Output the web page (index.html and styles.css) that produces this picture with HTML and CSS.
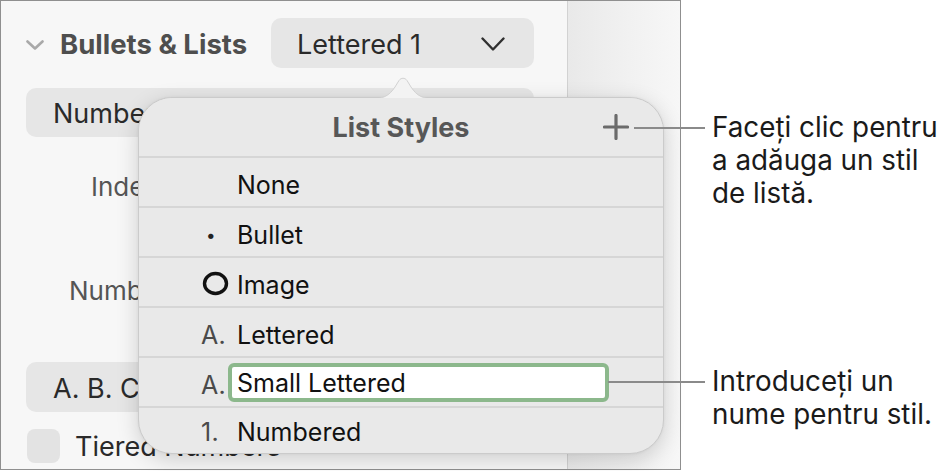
FILE: index.html
```html
<!DOCTYPE html>
<html lang="ro">
<head>
<meta charset="utf-8">
<title>List Styles</title>
<link rel="stylesheet" href="styles.css">
</head>
<body>
<div class="stage">
  <div class="frame">
    <div class="inspector">
      <div class="section-head">
        <svg class="disclosure" width="18" height="10" viewBox="0 0 18 10"><path d="M1.5 1.5 L9 8.5 L16.5 1.5" fill="none" stroke="#a9a9a9" stroke-width="2.6" stroke-linecap="round" stroke-linejoin="round"/></svg>
        <span class="section-title">Bullets &amp; Lists</span>
        <div class="popup">
          <span>Lettered 1</span>
          <svg class="popup-chev" width="24" height="15" viewBox="0 0 24 15"><path d="M1.5 1.5 L12 12.5 L22.5 1.5" fill="none" stroke="#303030" stroke-width="2.4" stroke-linecap="round" stroke-linejoin="round"/></svg>
        </div>
      </div>
      <div class="wide-btn">Numbered</div>
      <div class="field-row row-indent"><span class="label">Indent:</span></div>
      <div class="field-row row-number"><span class="label">Number:</span></div>
      <div class="wide-btn abc">A. B. C.</div>
      <div class="check-row"><span class="checkbox"></span><span class="check-label">Tiered Numbers</span></div>
    </div>
    <div class="strip"></div>

    <div class="popover">
      <svg class="arrow" width="64" height="24" viewBox="0 0 64 24"><path d="M0 24 C12 24 18 21 24 12 L28 5.5 C30 2.5 34 2.5 36 5.5 L40 12 C46 21 52 24 64 24 Z" fill="#f3f3f3" stroke="#d2d2d2" stroke-width="1"/></svg>
      <div class="pop-head">
        <span></span>
        <span class="pop-title">List Styles</span>
        <svg class="plus" width="26" height="26" viewBox="0 0 26 26"><path d="M13 1.5 V24.5 M1.5 13 H24.5" stroke="#6b6b6b" stroke-width="3.2" stroke-linecap="round"/></svg>
      </div>
      <ul class="styles">
        <li class="style-row"><span class="marker"></span><span class="name">None</span></li>
        <li class="style-row"><span class="marker m-bullet">•</span><span class="name">Bullet</span></li>
        <li class="style-row"><span class="marker m-image"><svg width="27" height="25" viewBox="0 0 27 25"><ellipse cx="13.5" cy="12.5" rx="11" ry="10" fill="none" stroke="#111" stroke-width="3.4"/></svg></span><span class="name">Image</span></li>
        <li class="style-row"><span class="marker">A.</span><span class="name">Lettered</span></li>
        <li class="style-row"><span class="marker">A.</span><span class="name-field">Small Lettered</span></li>
        <li class="style-row"><span class="marker">1.</span><span class="name">Numbered</span></li>
      </ul>
    </div>
  </div>

  <div class="callout callout-add">
    <span class="leader"></span>
    <p class="callout-text">Faceți clic pentru<br>a adăuga un stil<br>de listă.</p>
  </div>
  <div class="callout callout-name">
    <span class="leader"></span>
    <p class="callout-text">Introduceți un<br>nume pentru stil.</p>
  </div>
</div>
</body>
</html>
```

FILE: styles.css
```css
* { box-sizing: border-box; }
html, body { margin: 0; padding: 0; background: #ffffff; }
body {
  font-family: "Inter", "Noto Sans", "Liberation Sans", sans-serif;
  color: #1d1d1d;
  width: 947px;
  height: 471px;
  overflow: hidden;
}
.stage { position: relative; width: 947px; height: 471px; }

.frame {
  position: relative;
  width: 681px;
  height: 470px;
  border: 1px solid #8f8f8f;
  display: flex;
  background: #f7f7f7;
}

.inspector {
  width: 566px;
  padding: 17px 33px 0 25px;
  display: flex;
  flex-direction: column;
  background: #f7f7f7;
}
.strip {
  flex: 1;
  border-left: 1px solid #d2d2d2;
  background: linear-gradient(90deg, #e9e9e9 0%, #efefef 40%, #f7f7f7 100%);
}

.section-head {
  display: flex;
  align-items: center;
  height: 50px;
}
.disclosure { margin: 3px 16px 0 0; }
.section-title {
  font-size: 27.5px;
  font-weight: 700;
  color: #4e4e4e;
  padding-top: 2px;
}
.popup {
  margin-left: auto;
  width: 263px;
  height: 50px;
  background: #e6e6e6;
  border-radius: 10px;
  display: flex;
  align-items: center;
  justify-content: space-between;
  padding: 2px 29px 0 26px;
  font-size: 27px;
  color: #2a2a2a;
}
.popup-chev { margin-top: 0; }

.wide-btn {
  margin-top: 20px;
  height: 49px;
  background: #e6e6e6;
  border-radius: 10px;
  display: flex;
  align-items: center;
  padding: 2px 0 0 27px;
  font-size: 27px;
  color: #2a2a2a;
}
.field-row {
  display: flex;
  align-items: center;
  font-size: 26px;
  color: #555555;
}
.row-indent { margin-top: 34px; height: 30px; padding-left: 65px; }
.row-number { margin-top: 74px; height: 30px; padding-left: 43px; }
.wide-btn.abc { margin-top: 57px; height: 50px; }

.check-row {
  margin-top: 17px;
  display: flex;
  align-items: center;
  gap: 15px;
  padding-left: 1px;
}
.checkbox {
  width: 33px;
  height: 34px;
  border-radius: 8px;
  background: #e3e3e3;
}
.check-label { font-size: 27px; color: #2a2a2a; }

/* popover */
.popover {
  position: absolute;
  left: 137px;
  top: 96px;
  width: 526px;
  height: 357px;
  background: #e9e9e9;
  border: 1px solid #cbcbcb;
  border-radius: 34px;
  box-shadow: 0 6px 22px rgba(0, 0, 0, 0.16), 0 0 3px rgba(0, 0, 0, 0.06);
}
.arrow {
  position: absolute;
  left: 232px;
  top: -23px;
}
.pop-head {
  display: grid;
  grid-template-columns: 1fr auto 1fr;
  align-items: center;
  height: 60px;
  border-bottom: 2px solid #d6d6d6;
  position: relative;
  background: #e9e9e9;
  border-radius: 34px 34px 0 0;
}
.pop-title {
  font-size: 27px;
  font-weight: 700;
  color: #575757;
  padding-top: 1px;
}
.plus { justify-self: end; margin-right: 34px; }

.styles { list-style: none; margin: 0; padding: 0; }
.style-row {
  height: 50px;
  border-bottom: 2px solid #d6d6d6;
  display: flex;
  align-items: center;
  padding: 6px 0 0 62px;
  font-size: 25px;
}
.style-row:last-child { border-bottom: none; height: 46px; padding-top: 2px; }
.marker {
  width: 30px;
  margin-right: 6px;
  color: #4a4a4a;
  text-align: left;
  display: flex;
  align-items: center;
  font-size: 25px;
  letter-spacing: 0.3px;
}
.m-bullet { padding-left: 5px; font-size: 17px; color: #222; }
.m-image { padding-left: 0; margin-top: -4px; margin-left: 1px; margin-right: 5px; }
.name { color: #111111; font-weight: 400; }
.name-field {
  margin-left: -9px;
  width: 381px;
  height: 39px;
  margin-top: -6px;
  border: 4px solid #8cb88c;
  border-radius: 6px;
  background: #ffffff;
  padding: 1px 0 0 5px;
  display: flex;
  align-items: center;
  color: #111111;
  font-weight: 400;
}

/* callouts */
.callout {
  position: absolute;
  display: flex;
  align-items: flex-start;
}
.leader {
  height: 2px;
  background: #8a8a8a;
  margin-top: 16px;
  margin-right: 7px;
}
.callout-add { left: 634px; top: 111px; }
.callout-add .leader { width: 71px; }
.callout-name { left: 608px; top: 365px; }
.callout-name .leader { width: 97px; }
.callout-text {
  margin: 0;
  font-size: 27.8px;
  line-height: 33px;
  color: #1a1a1a;
  white-space: nowrap;
}
```
